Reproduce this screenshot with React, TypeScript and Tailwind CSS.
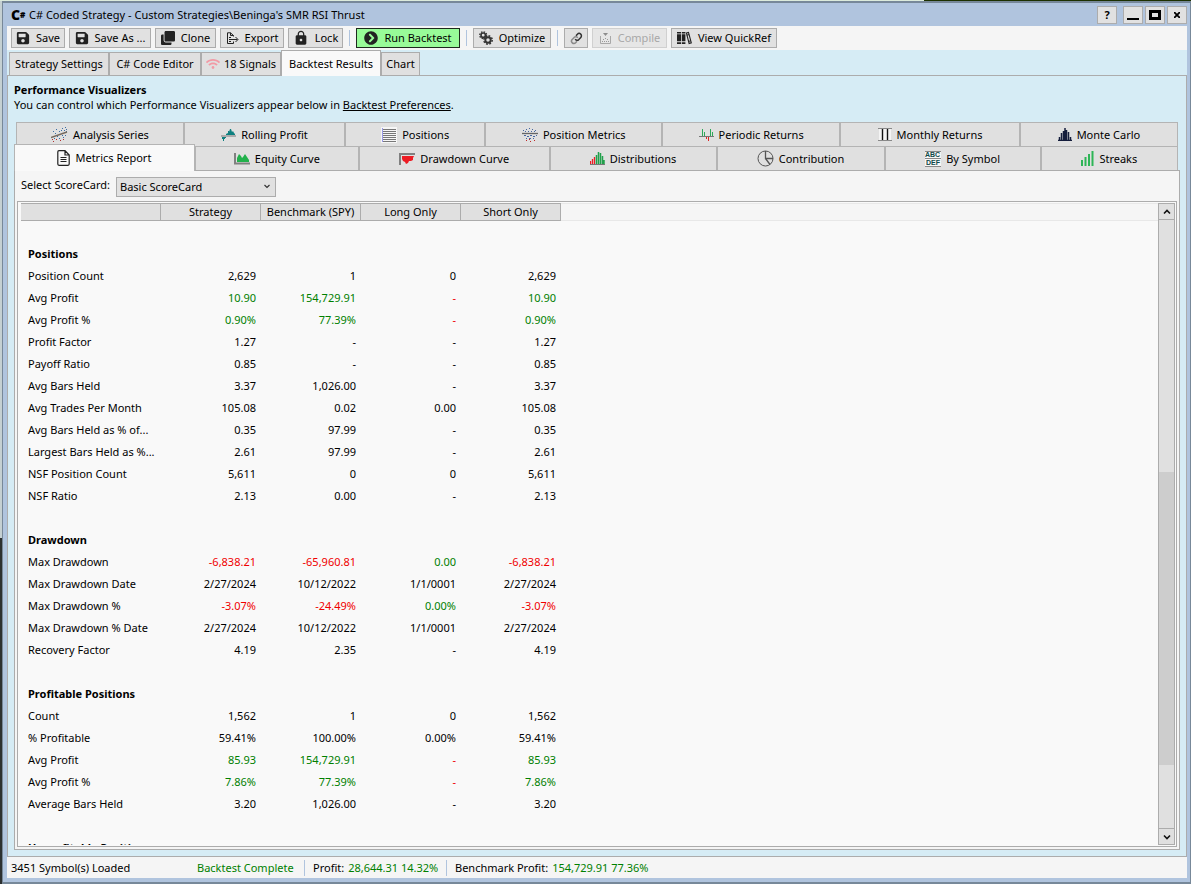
import type { ReactNode } from 'react';
import { FaChevronCircleRight, FaClone, FaSave, FaWifi } from 'react-icons/fa';
import { MdLock } from 'react-icons/md';

const ExportIcon = () => (
  <svg width="13" height="13" viewBox="0 0 13 13" fill="none" stroke="#222" strokeWidth="1">
    <path d="M7.5 4.5V3.5L4.5 .8H1.5V11.5H7.5V9.5M4.5 .8V3.5H7.5M3 5.5h2M3 7.5h8.5M3 9.5h2M9.5 5l2.5 2.5L9.5 10" />
  </svg>
);

const GearsIcon = () => (
  <svg width="14" height="14" viewBox="0 0 14 14" fill="none" stroke="#333">
    <circle cx="4.2" cy="4.2" r="2.2" strokeWidth="1.6" />
    <circle cx="4.2" cy="4.2" r="3.4" strokeWidth="1.4" strokeDasharray="1.5 1.17" />
    <circle cx="9" cy="9" r="2.7" strokeWidth="1.9" />
    <circle cx="9" cy="9" r="4.2" strokeWidth="1.5" strokeDasharray="1.8 1.5" />
  </svg>
);

const LinkIcon = () => (
  <svg width="13" height="13" viewBox="0 0 13 13" fill="none" strokeWidth="1.5">
    <path d="M7 9.2L5.6 10.8A2.3 2.3 0 0 1 2.2 7.6L4.4 5.2A2.3 2.3 0 0 1 7.8 5.8" stroke="#8a8a8a" />
    <path d="M6 3.8L7.4 2.2A2.3 2.3 0 0 1 10.8 5.4L8.6 7.8A2.3 2.3 0 0 1 5.2 7.2" stroke="#333" />
  </svg>
);

const CompileIcon = () => (
  <svg width="13" height="13" viewBox="0 0 13 13">
    <path d="M4 1h5L6.5 4z" fill="#8c8c8c" />
    <path d="M1.5 4v7.5h10V4" fill="none" stroke="#a8a8a8" />
    <path d="M4 7h1v1H4zM6 6h1v1H6zM8 7h1v1H8zM3 9h1v1H3zM5 9h1v1H5zM7 9h1v1H7zM9 9h1v1H9z" fill="#999" />
  </svg>
);

const BooksIcon = () => (
  <svg width="15" height="14" viewBox="0 0 15 14" fill="#222">
    <path d="M0 1h4v1.5H0zM0 3.3h4v7H0zM0 11.2h4V13H0zM4.8 1h3.6v1.5H4.8zM4.8 3.3h3.6v7H4.8zM4.8 11.2h3.6V13H4.8z" />
    <path d="M9.4 2l2.1-.6 2.8 10.5-2.2.6z" fill="none" stroke="#222" strokeWidth="1.1" />
    <path d="M9.8 4.2l2.2-.6M11.6 10.4l2.2-.6" stroke="#222" />
  </svg>
);

const AnalysisIcon = () => (
  <svg width="17" height="15" viewBox="0 0 17 15">
    <path d="M2 4h1v1H2zM5 2h1v1H5zM8 4h1v1H8zM11 1h1v1h-1zM14 0h1v1h-1zM13 3h1v1h-1zM4 6h1v1H4zM10 3h1v1h-1zM15 4h1v1h-1zM6 9h1v1H6zM11 8h1v1h-1zM14 8h1v1h-1zM8 11h1v1H8zM3 11h1v1H3zM12 10h1v1h-1zM15 2h1v1h-1z" fill="#3b6ea5" />
    <path d="M1 12h1v1H1zM2 14h1v1H2zM5 12h1v1H5zM9 13h1v1H9zM12 12h1v1h-1z" fill="#b03030" />
    <path d="M0 10.5L16 5" stroke="#776a5e" strokeWidth="1.4" />
  </svg>
);

const RollingIcon = () => (
  <svg width="15" height="12" viewBox="0 0 15 12">
    <path d="M5 6V5l2-1V2h1v1l1-3h1l1 3 1-1 1 2 1 1v1z" fill="#0e8080" />
    <path d="M1 8h4v1H4v1H3v2H2v-2H1z" fill="#0e8080" />
    <path d="M0 7h15" stroke="#777" />
  </svg>
);

const PositionsIcon = () => (
  <svg width="16" height="16" viewBox="0 0 16 16">
    <path d="M0 0h16v16H0z" fill="#f6f6f6" />
    <path d="M1 2.5h14M1 4.5h14M1 6.5h14M1 8.5h14M1 10.5h14M1 12.5h14M1 14.5h14" stroke="#777" />
    <path d="M1.5 1v14" stroke="#9a9ae6" />
  </svg>
);

const PositionMetricsIcon = () => (
  <svg width="16" height="14" viewBox="0 0 16 14">
    <path d="M1 2h1v1H1zM4 1h1v1H4zM7 0h1v1H7zM10 1h1v1h-1zM13 2h1v1h-1zM3 3h1v1H3zM6 3h1v1H6zM9 3h1v1H9zM12 3h1v1h-1zM2 7h2v1H2zM5 8h2v1H5zM8 7h2v1H8zM11 8h2v1h-2zM4 10h1v1H4zM7 10h2v1H7zM11 10h1v1h-1zM14 7h1v1h-1z" fill="#4668a0" />
    <path d="M4 12h1v1H4zM7 11h1v1H7zM8 13h1v1H8zM12 12h1v1h-1z" fill="#c02828" />
    <path d="M0 5.5h16" stroke="#666" strokeWidth="1.3" />
  </svg>
);

const PeriodicIcon = () => (
  <svg width="15" height="14" viewBox="0 0 15 14">
    <path d="M3.5 1v7M5.5 4v4M11.5 1v7M13.5 4v4" stroke="#2ea85a" />
    <path d="M7.5 9v2M9.5 9v4" stroke="#e02424" />
    <path d="M0 8.5h15" stroke="#777" />
  </svg>
);

const MonthlyIcon = () => (
  <svg width="14" height="13" viewBox="0 0 14 13">
    <path d="M1 1h12v12H1z" fill="#f4f4f4" />
    <path d="M4.5 0v13M9.5 0v13" stroke="#111" strokeWidth="1.4" />
    <path d="M0 .5h14M0 12.5h14" stroke="#888" />
  </svg>
);

const MonteCarloIcon = () => (
  <svg width="14" height="13" viewBox="0 0 14 13">
    <path d="M0 12.5h14M1.5 9v4M3.5 5v8M5.5 3v10M7 0v13M8.5 2v11M10.5 4v9M12.5 9v4" stroke="#141d3c" strokeWidth="1.5" />
  </svg>
);

const ReportIcon = () => (
  <svg width="13" height="16" viewBox="0 0 13 16" fill="none" stroke="#222">
    <path d="M.8 2a1.3 1.3 0 0 1 1.2-1.3H8L12.2 5v9a1.3 1.3 0 0 1-1.2 1.3H2A1.3 1.3 0 0 1 .8 14zM8 .7V5h4.2" strokeWidth="1.2" />
    <path d="M3.5 7.5h6M3.5 9.5h6M3.5 11.5h6" />
  </svg>
);

const EquityIcon = () => (
  <svg width="16" height="12" viewBox="0 0 16 12">
    <path d="M3 9V5l2-4 2 2 1 2 1-1 2-3 2 3 2 3v2z" fill="#22b14c" />
    <path d="M1 0v10.5h15" fill="none" stroke="#808080" strokeWidth="2" />
  </svg>
);

const DrawdownIcon = () => (
  <svg width="16" height="12" viewBox="0 0 16 12">
    <path d="M3 3h12l-1 2v2l-2 1-2 0-1 2-2 1-1-2-2-1-1-2z" fill="#ed1c24" />
    <path d="M16 1H1v11" fill="none" stroke="#808080" strokeWidth="2" />
  </svg>
);

const DistributionsIcon = () => (
  <svg width="15" height="13" viewBox="0 0 15 13">
    <path d="M.5 9v3M2.5 7v5M4.5 5v7" stroke="#ed1c24" strokeWidth="1.3" />
    <path d="M6.5 3v9M8.5 0v12M10.5 1v11M12.5 4v8M14 8v4" stroke="#22a04c" strokeWidth="1.5" />
    <path d="M0 12.5h15" stroke="#777" />
  </svg>
);

const PieIcon = () => (
  <svg width="17" height="17" viewBox="0 0 17 17" fill="none" stroke="#555">
    <circle cx="8.5" cy="8.5" r="7.5" />
    <path d="M8.5 1v7.5H16M8.5 8.5l4.5 6" strokeWidth="1.3" />
  </svg>
);

const SymbolIcon = () => (
  <svg width="16" height="16" viewBox="0 0 16 16" fontFamily="Liberation Sans" fontWeight="bold" fontSize="7" fill="#0f4a4a">
    <path d="M0 0h16v16H0z" fill="#f6f6f6" />
    <path d="M0 .5h16M0 7.5h16M0 15.5h16" stroke="#888" />
    <text x="0" y="6">ABC</text>
    <text x="1" y="14">DEF</text>
  </svg>
);

const StreaksIcon = () => (
  <svg width="13" height="15" viewBox="0 0 13 15">
    <path d="M1 9v6M4.5 6v9M8 3v12M11.5 0v15" stroke="#2eb557" strokeWidth="2" />
  </svg>
);

const Chevron = ({ up = false }: { up?: boolean }) => (
  <svg width="8" height="6" viewBox="0 0 8 6" fill="none" stroke="#111" strokeWidth="1.6">
    <path d={up ? 'M1 4.5l3-3 3 3' : 'M1 1.5l3 3 3-3'} />
  </svg>
);

const Separator = () => <div className="mx-0.5 h-4 w-px bg-[#b0c4de]" />;

function ToolButton({ icon, label, width, look = 'border-[#acacac] bg-[#e1e1e1]', disabled }: {
  icon: ReactNode;
  label?: string;
  width: string;
  look?: string;
  disabled?: boolean;
}) {
  return (
    <button
      disabled={disabled}
      aria-label={label ?? 'Link'}
      className={`flex h-5 shrink-0 items-center justify-center gap-1.5 border whitespace-nowrap disabled:text-[#a8a8a8] ${width} ${look}`}
    >
      {icon}
      {label}
    </button>
  );
}

const mainTabs = [
  { label: 'Strategy Settings', width: 'w-[100px]' },
  { label: 'C# Code Editor', width: 'w-[92px]' },
  { label: '18 Signals', width: 'w-[80px]', icon: <FaWifi size={14} color="#f29aa5" /> },
  { label: 'Backtest Results', width: 'w-[100px]', active: true },
  { label: 'Chart', width: 'w-[39px]' },
];

const topVisualizers = [
  { label: 'Analysis Series', grow: 'flex-[168]', icon: <AnalysisIcon /> },
  { label: 'Rolling Profit', grow: 'flex-[161]', icon: <RollingIcon /> },
  { label: 'Positions', grow: 'flex-[140]', icon: <PositionsIcon /> },
  { label: 'Position Metrics', grow: 'flex-[177]', icon: <PositionMetricsIcon /> },
  { label: 'Periodic Returns', grow: 'flex-[178]', icon: <PeriodicIcon /> },
  { label: 'Monthly Returns', grow: 'flex-[180]', icon: <MonthlyIcon /> },
  { label: 'Monte Carlo', grow: 'flex-[158]', icon: <MonteCarloIcon /> },
];

const bottomVisualizers = [
  { label: 'Metrics Report', grow: 'flex-[181]', icon: <ReportIcon />, active: true },
  { label: 'Equity Curve', grow: 'flex-[164]', icon: <EquityIcon /> },
  { label: 'Drawdown Curve', grow: 'flex-[191]', icon: <DrawdownIcon /> },
  { label: 'Distributions', grow: 'flex-[167]', icon: <DistributionsIcon /> },
  { label: 'Contribution', grow: 'flex-[168]', icon: <PieIcon /> },
  { label: 'By Symbol', grow: 'flex-[156]', icon: <SymbolIcon /> },
  { label: 'Streaks', grow: 'flex-[137]', icon: <StreaksIcon /> },
];

type Tab = { label: string; grow: string; icon: ReactNode; active?: boolean };

function VisualizerRow({ tabs }: { tabs: Tab[] }) {
  return (
    <div className="mx-0.5 flex h-6">
      {tabs.map((tab) => (
        <button
          key={tab.label}
          className={`flex min-w-0 items-center justify-center gap-[5px] border border-b-0 border-[#b4b4b4] whitespace-nowrap ${tab.grow} ${
            tab.active ? 'z-10 -mt-0.5 -mb-px -ml-0.5 bg-[#f9f9f9]' : 'bg-[#e0e0e0]'
          }`}
        >
          {tab.icon}
          {tab.label}
        </button>
      ))}
    </div>
  );
}

// tone is only set on rows that are coloured by sign
type Row = { name: string; values: string[]; tone?: boolean };

const sections: { title: string; rows: Row[] }[] = [
  {
    title: 'Positions',
    rows: [
      { name: 'Position Count', values: ['2,629', '1', '0', '2,629'] },
      { name: 'Avg Profit', values: ['10.90', '154,729.91', '-', '10.90'], tone: true },
      { name: 'Avg Profit %', values: ['0.90%', '77.39%', '-', '0.90%'], tone: true },
      { name: 'Profit Factor', values: ['1.27', '-', '-', '1.27'] },
      { name: 'Payoff Ratio', values: ['0.85', '-', '-', '0.85'] },
      { name: 'Avg Bars Held', values: ['3.37', '1,026.00', '-', '3.37'] },
      { name: 'Avg Trades Per Month', values: ['105.08', '0.02', '0.00', '105.08'] },
      { name: 'Avg Bars Held as % of...', values: ['0.35', '97.99', '-', '0.35'] },
      { name: 'Largest Bars Held as %...', values: ['2.61', '97.99', '-', '2.61'] },
      { name: 'NSF Position Count', values: ['5,611', '0', '0', '5,611'] },
      { name: 'NSF Ratio', values: ['2.13', '0.00', '-', '2.13'] },
    ],
  },
  {
    title: 'Drawdown',
    rows: [
      { name: 'Max Drawdown', values: ['-6,838.21', '-65,960.81', '0.00', '-6,838.21'], tone: true },
      { name: 'Max Drawdown Date', values: ['2/27/2024', '10/12/2022', '1/1/0001', '2/27/2024'] },
      { name: 'Max Drawdown %', values: ['-3.07%', '-24.49%', '0.00%', '-3.07%'], tone: true },
      { name: 'Max Drawdown % Date', values: ['2/27/2024', '10/12/2022', '1/1/0001', '2/27/2024'] },
      { name: 'Recovery Factor', values: ['4.19', '2.35', '-', '4.19'] },
    ],
  },
  {
    title: 'Profitable Positions',
    rows: [
      { name: 'Count', values: ['1,562', '1', '0', '1,562'] },
      { name: '% Profitable', values: ['59.41%', '100.00%', '0.00%', '59.41%'] },
      { name: 'Avg Profit', values: ['85.93', '154,729.91', '-', '85.93'], tone: true },
      { name: 'Avg Profit %', values: ['7.86%', '77.39%', '-', '7.86%'], tone: true },
      { name: 'Average Bars Held', values: ['3.20', '1,026.00', '-', '3.20'] },
    ],
  },
  { title: 'Unprofitable Positions', rows: [] },
];

const valueColor = (value: string, tone?: boolean) => {
  if (!tone) return 'text-black';
  return value.startsWith('-') ? 'text-[#f00000]' : 'text-[#008000]';
};

function MetricsTable() {
  return (
    <table className="w-[540px] table-fixed border-separate border-spacing-0">
      <colgroup>
        <col className="w-[140px]" />
        <col span={4} className="w-[100px]" />
      </colgroup>
      <thead>
        <tr className="h-[18px] bg-[#e0e0e0]">
          {['', 'Strategy', 'Benchmark (SPY)', 'Long Only', 'Short Only'].map((head) => (
            <th key={head} className="border-y border-r border-[#acacac] p-0 leading-4 font-normal whitespace-nowrap">
              {head}
            </th>
          ))}
        </tr>
      </thead>
      {sections.map((section) => (
        <tbody key={section.title}>
          <tr className="h-[22px]">
            <td colSpan={5} className="p-0" />
          </tr>
          <tr className="h-[22px]">
            <th colSpan={5} className="p-0 pl-[7px] text-left font-bold">{section.title}</th>
          </tr>
          {section.rows.map((row) => (
            <tr key={row.name} className="h-[22px]">
              <td className="p-0 pl-[7px] whitespace-nowrap">{row.name}</td>
              {row.values.map((value, i) => (
                <td key={i} className={`p-0 pr-[5px] text-right ${valueColor(value, row.tone)}`}>{value}</td>
              ))}
            </tr>
          ))}
        </tbody>
      ))}
    </table>
  );
}

function ScrollBar() {
  return (
    <div className="flex w-[17px] shrink-0 flex-col border border-[#acacac] bg-[#e0e0e0]">
      <button aria-label="Scroll up" className="flex h-4 items-center justify-center border-b border-[#acacac]">
        <Chevron up />
      </button>
      <div className="flex flex-1 flex-col">
        <div className="flex-[252]" />
        <div className="flex-[293] bg-[#cdcdcd]" />
        <div className="flex-[63]" />
      </div>
      <button aria-label="Scroll down" className="flex h-4 items-center justify-center border-t border-[#acacac]">
        <Chevron />
      </button>
    </div>
  );
}

function TitleBar() {
  const button = 'flex h-[18px] w-5 items-center justify-center border border-[#acacac] bg-[#e1e1e1]';
  return (
    <header className="flex h-[23px] shrink-0 items-center pl-1">
      <span className="flex w-[18px] items-center font-black">
        <span className="text-sm leading-4">C</span>
        <span className="text-[8px]">#</span>
      </span>
      <h1 className="flex-1">C# Coded Strategy - Custom Strategies\Beninga's SMR RSI Thrust</h1>
      <div className="flex gap-0.5">
        <button aria-label="Help" className={`${button} mr-1 font-bold`}>?</button>
        <button aria-label="Minimize" className={button}>
          <svg width="12" height="12"><path d="M0 9h12v2H0z" /></svg>
        </button>
        <button aria-label="Maximize" className={button}>
          <svg width="12" height="10"><path d="M1.5 1.5h9v7h-9z" fill="none" stroke="#000" strokeWidth="3" /></svg>
        </button>
        <button aria-label="Close" className={button}>
          <svg width="6" height="6" stroke="#000" strokeWidth="1.8"><path d="M0 0l6 6M6 0L0 6" /></svg>
        </button>
      </div>
    </header>
  );
}

export default function App() {
  return (
    <div className="flex h-screen flex-col overflow-hidden bg-[#d5dfdc] font-['Noto_Sans','Open_Sans',sans-serif] text-[11px] leading-4 text-black">
      <div className="flex h-px shrink-0">
        <div className="flex-[924] bg-[#dcebdc]" />
        <div className="flex-[267] bg-[#1c3000]" />
      </div>
      <div className="flex min-h-0 flex-1">
        <div className="flex w-0.5 shrink-0 flex-col">
          <div className="flex-[537] bg-[#c5d0d2]" />
          <div className="flex-[346] bg-[#2c3030]" />
        </div>
        <div className="flex min-w-0 flex-1 flex-col border-t-2 border-r border-b-2 border-l border-[#778899] bg-[#b0c4de] pr-[3px] pb-1 pl-1">
          <TitleBar />

          <div className="flex h-6 shrink-0 items-center gap-1 bg-[#f5f5f5] pl-1">
            <ToolButton width="w-[54px]" icon={<FaSave size={14} color="#222" />} label="Save" />
            <ToolButton width="w-[82px]" icon={<FaSave size={14} color="#222" />} label="Save As ..." />
            <ToolButton width="w-[61px]" icon={<FaClone size={14} color="#222" />} label="Clone" />
            <ToolButton width="w-[64px]" icon={<ExportIcon />} label="Export" />
            <ToolButton width="w-[55px]" icon={<MdLock size={16} color="#222" />} label="Lock" />
            <Separator />
            <ToolButton
              width="w-[104px]"
              look="border-[#1e2a1e] bg-[#98fb98]"
              icon={<FaChevronCircleRight size={14} color="#222" />}
              label="Run Backtest"
            />
            <Separator />
            <ToolButton width="w-[78px]" icon={<GearsIcon />} label="Optimize" />
            <Separator />
            <ToolButton width="w-[24px]" icon={<LinkIcon />} />
            <ToolButton width="w-[75px]" look="border-[#d0d0d0] bg-[#e6e6e6]" icon={<CompileIcon />} label="Compile" disabled />
            <ToolButton width="w-[106px]" icon={<BooksIcon />} label="View QuickRef" />
          </div>

          <nav className="flex h-[25px] shrink-0 items-end bg-[#d6ecf5] pl-0.5">
            {mainTabs.map((tab) => (
              <button
                key={tab.label}
                className={`flex items-center justify-center gap-1 border border-b-0 border-[#acacac] whitespace-nowrap ${tab.width} ${
                  tab.active ? 'z-10 -mb-px h-[26px] bg-[#f9f9f9]' : 'h-[23px] bg-[#e0e0e0]'
                }`}
              >
                {tab.icon}
                {tab.label}
              </button>
            ))}
          </nav>

          <main className="flex min-h-0 flex-1 flex-col border border-[#acacac] bg-[#d6ecf5] px-1.5 pb-1.5">
            <div className="mb-2 pt-1.5 leading-[15px]">
              <h2 className="font-bold">Performance Visualizers</h2>
              <p>
                You can control which Performance Visualizers appear below in{' '}
                <a href="#preferences" className="underline">Backtest Preferences</a>.
              </p>
            </div>

            <div className="mt-0.5">
              <VisualizerRow tabs={topVisualizers} />
              <VisualizerRow tabs={bottomVisualizers} />
            </div>

            <section className="flex min-h-0 flex-1 flex-col border border-[#acacac] bg-[#f5f5f5] p-0.5">
              <div className="flex h-7 shrink-0 items-end gap-1 pb-1 pl-1">
                <label htmlFor="scorecard" className="mb-1 w-[91px] whitespace-nowrap">Select ScoreCard:</label>
                <div className="relative">
                  <select
                    id="scorecard"
                    className="block h-5 w-40 appearance-none rounded-none border border-[#acacac] bg-[#e1e1e1] pl-[3px] leading-4"
                  >
                    <option>Basic ScoreCard</option>
                  </select>
                  <span className="pointer-events-none absolute top-[7px] right-1.5">
                    <svg width="6" height="5" viewBox="0 0 6 5" fill="none" stroke="#333" strokeWidth="1.2">
                      <path d="M.5 1L3 3.5 5.5 1" />
                    </svg>
                  </span>
                </div>
              </div>

              <div className="flex min-h-0 flex-1 border border-[#acacac] bg-[#f9f9f9] p-px">
                <div className="flex min-w-0 flex-1 overflow-hidden pl-0.5">
                  <MetricsTable />
                  <div className="h-[18px] flex-1 border-y border-[#e8e8e8] bg-[#f5f5f5]" />
                </div>
                <ScrollBar />
              </div>
            </section>
          </main>

          <footer className="flex h-[21px] shrink-0 items-center bg-[#f5f5f5] pl-1">
            <span className="w-[186px]">3451 Symbol(s) Loaded</span>
            <span className="w-[107px] text-[#008000]">Backtest Complete</span>
            <span className="flex w-[142px] gap-1 border-l border-[#b0c4de] pl-2 whitespace-nowrap">
              Profit: <span className="text-[#008000]">28,644.31 14.32%</span>
            </span>
            <span className="flex gap-1 border-l border-[#b0c4de] pl-2 whitespace-nowrap">
              Benchmark Profit: <span className="text-[#008000]">154,729.91 77.36%</span>
            </span>
          </footer>
        </div>
      </div>
    </div>
  );
}
